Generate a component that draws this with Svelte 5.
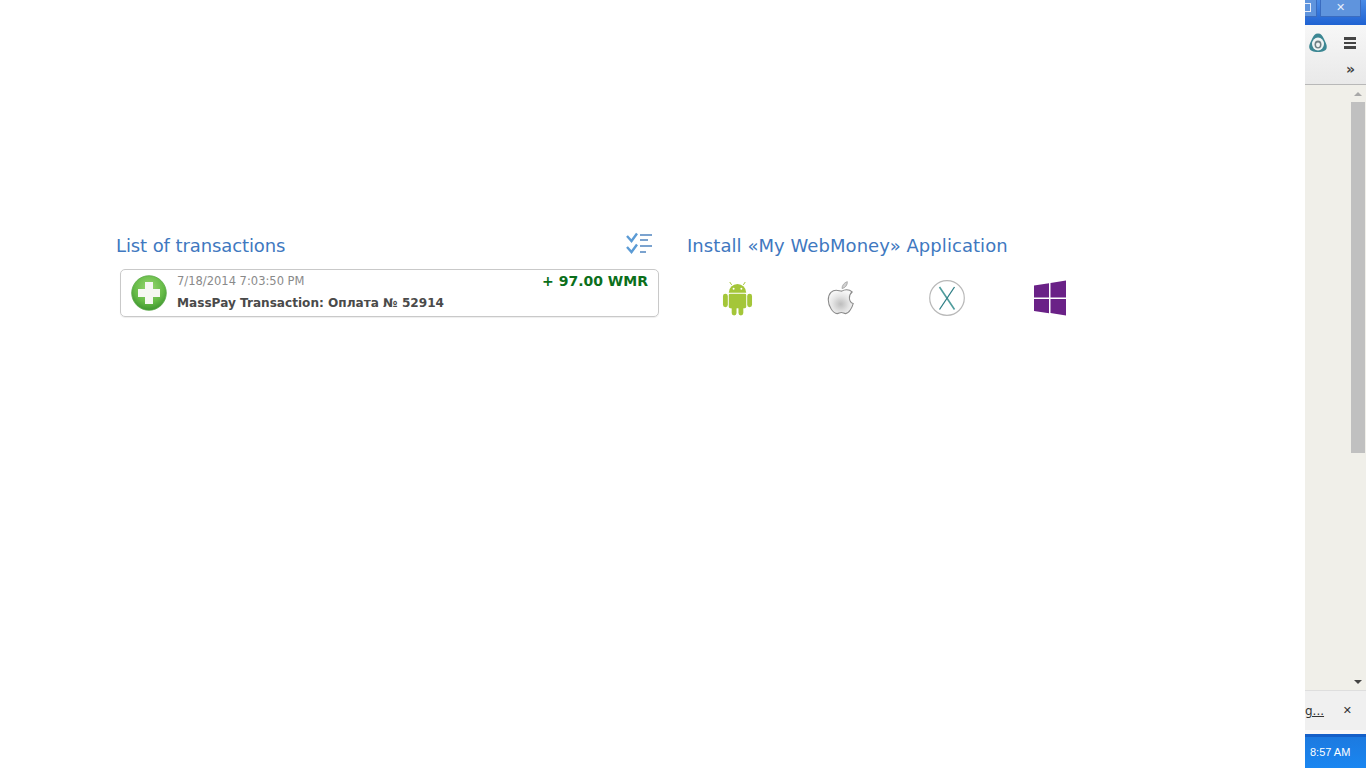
<script>
  const tx = {
    date: '7/18/2014 7:03:50 PM',
    amount: '+ 97.00 WMR',
    title: 'MassPay Transaction: Оплата № 52914'
  };
</script>

<div class="screen">
  <main class="page">
    <section class="left">
      <header class="head">
        <h2>List of transactions</h2>
        <svg class="filter" width="27" height="24" viewBox="0 0 27 24" fill="none" aria-hidden="true">
          <g stroke="#5b9bd5" stroke-width="2.4">
            <path d="M1 4l4.500 5L11 1.500" />
            <path d="M1 15l4.500 5L11 12.500" />
          </g>
          <g stroke="#7ba3cf" stroke-width="2">
            <path d="M14 3h12M14 8h8M14 14h12M14 20h6" />
          </g>
        </svg>
      </header>
      <div class="card">
        <svg class="plus" width="36" height="36" viewBox="0 0 36 36" aria-hidden="true">
          <defs>
            <radialGradient id="gr" cx="50%" cy="35%" r="65%">
              <stop offset="0" stop-color="#9ad873" />
              <stop offset="0.65" stop-color="#66bb47" />
              <stop offset="1" stop-color="#3f9630" />
            </radialGradient>
          </defs>
          <circle cx="18" cy="18" r="17.300" fill="url(#gr)" stroke="#5aa848" stroke-width="0.800" />
          <path d="M14 7h8v7h7v8h-7v7h-8v-7H7v-8h7z" fill="#f6f8f2" />
        </svg>
        <div class="info">
          <div class="top">
            <span class="date">{tx.date}</span>
            <span class="amount">{tx.amount}</span>
          </div>
          <div class="title">{tx.title}</div>
        </div>
      </div>
    </section>
    <section class="right">
      <h2>Install «My WebMoney» Application</h2>
      <div class="apps">
        <svg width="31" height="36" viewBox="0 0 32 36" aria-hidden="true">
          <g fill="#a4c639">
            <path d="M7 12.500a9 9 0 0 1 18 0z" />
            <rect x="7" y="13.500" width="18" height="15" rx="1.500" />
            <rect x="1" y="13.500" width="5" height="14" rx="2.500" />
            <rect x="26" y="13.500" width="5" height="14" rx="2.500" />
            <rect x="10" y="26" width="5" height="10" rx="2.500" />
            <rect x="17" y="26" width="5" height="10" rx="2.500" />
          </g>
          <path d="M10 4.500L8 1.500M22 4.500L24 1.500" stroke="#a4c639" stroke-width="1" />
          <circle cx="12" cy="8.500" r="1" fill="#fff" />
          <circle cx="20" cy="8.500" r="1" fill="#fff" />
        </svg>
        <svg class="apple" width="32" height="38" viewBox="0 0 30 36" aria-hidden="true">
          <defs>
            <radialGradient id="ap" cx="50%" cy="60%" r="55%">
              <stop offset="0" stop-color="#bdbdbd" />
              <stop offset="0.6" stop-color="#e4e4e4" />
              <stop offset="1" stop-color="#f6f6f6" />
            </radialGradient>
          </defs>
          <path d="M14.800 11.500c2-1.200 6.500-2.400 9.800.800c-3.600 2.800-3.600 9.200 1 11c-1 3.700-4 9.500-7.200 9.500c-1.500 0-2.500-1-4-1s-2.500 1-4 1C6.500 32.800 2 25.500 2 20c0-6.800 4.200-9.400 7.500-9.400c2 0 3.700.9 5.300.900z" fill="url(#ap)" stroke="#8a8a8a" stroke-width="1" />
          <path d="M15 9c0-3 2-5.500 5-6.500c.3 3.200-2 6-5 6.500z" fill="#d0d0d0" stroke="#9a9a9a" stroke-width="0.700" />
        </svg>
        <svg class="osx" width="36" height="36" viewBox="0 0 36 36" aria-hidden="true">
          <circle cx="18" cy="18" r="17.300" fill="#fff" stroke="#b9b9b9" stroke-width="1.200" />
          <path d="M10.500 7l15 22.500" stroke="#4f9c9c" stroke-width="1.600" fill="none" />
          <path d="M25.500 7l-15 22.500" stroke="#2f7f86" stroke-width="1.300" fill="none" />
        </svg>
        <svg class="win" width="32" height="36" viewBox="0 0 32 36" aria-hidden="true">
          <path d="M0 5.500l15-2.300v14.300H0zM16.500 3L32 .5v17H16.500zM0 19h15v14.300L0 31zM16.500 19H32v16.500L16.500 33z" fill="#6a2187" />
        </svg>
      </div>
    </section>
  </main>

  <aside class="side">
    <div class="titlebar">
      <span class="winbtn restore"><span></span></span>
      <span class="winbtn close">✕</span>
    </div>
    <div class="toolbar">
      <div class="tools">
        <svg width="20" height="20" viewBox="0 0 20 20" aria-hidden="true">
          <path d="M10 .5c3 0 4.500 2 6 5.500c1.500 3.500 3.500 6.500 2.500 9.500c-.7 2-3.500 3.500-8.500 3.500s-7.800-1.500-8.500-3.500c-1-3 1-6 2.500-9.500C5.500 2.500 7 .5 10 .5z" fill="#3c8793" />
          <ellipse cx="10" cy="11" rx="6" ry="6.500" fill="#eef3f3" />
          <ellipse cx="10" cy="11.500" rx="3.500" ry="4" fill="#6d7f83" />
          <ellipse cx="10" cy="11.800" rx="2" ry="2.400" fill="#eef3f3" />
        </svg>
        <span class="burger"><i></i><i></i><i></i></span>
      </div>
      <div class="more">»</div>
    </div>
    <div class="scroll">
      <div class="track">
        <span class="arrow up"></span>
        <div class="thumb"></div>
        <span class="arrow down"></span>
      </div>
    </div>
    <div class="notice">
      <span class="link">g...</span>
      <span class="x">✕</span>
    </div>
    <div class="gap"></div>
    <div class="taskbar">8:57 AM</div>
  </aside>
</div>

<style>
  :global(body) {
    margin: 0;
    background: #fff;
  }
  .screen {
    display: flex;
    width: 1366px;
    height: 768px;
    overflow: hidden;
    font-family: "DejaVu Sans", Verdana, sans-serif;
  }
  .page {
    width: 1305px;
    box-sizing: border-box;
    padding: 232px 0 0 116px;
    display: flex;
    gap: 28px;
    align-items: flex-start;
  }
  h2 {
    margin: 0;
    font-size: 18px;
    font-weight: 400;
    line-height: 27px;
    color: #4078c0;
  }
  .left {
    width: 543px;
  }
  .left h2 {
    letter-spacing: -0.1px;
  }
  .right h2 {
    letter-spacing: 0.06px;
  }
  .head {
    display: flex;
    justify-content: space-between;
    align-items: flex-start;
    height: 37px;
    padding-right: 6px;
  }
  .card {
    margin-left: 4px;
    height: 48px;
    box-sizing: border-box;
    border: 1px solid #c9c9c9;
    border-radius: 5px;
    display: flex;
    align-items: center;
    padding: 0 10px;
    gap: 10px;
    box-shadow: 0 1px 1px #eee;
  }
  .plus {
    flex: none;
    margin-top: -1px;
  }
  .info {
    flex: 1;
  }
  .top {
    display: flex;
    justify-content: space-between;
    align-items: center;
    height: 20px;
    margin-top: -4px;
  }
  .date {
    font-size: 11.5px;
    color: #8a8a8a;
    margin-top: -2px;
  }
  .amount {
    font-size: 14px;
    font-weight: 700;
    color: #0b6f1b;
    margin-top: -2px;
  }
  .title {
    margin-top: 3px;
    font-size: 12.100px;
    font-weight: 700;
    line-height: 16px;
    color: #4a4a4a;
  }
  .apps {
    display: flex;
    align-items: center;
    padding-left: 35px;
    margin-top: 20px;
    height: 38px;
  }
  .apple {
    margin-left: 73px;
  }
  .osx {
    margin-left: 71px;
  }
  .win {
    margin-left: 69px;
  }
  .side {
    width: 61px;
    flex: none;
    display: flex;
    flex-direction: column;
    background: #f0efe9;
  }
  .titlebar {
    height: 25px;
    flex: none;
    box-sizing: border-box;
    background: linear-gradient(#4a8be6, #1f62d2);
    display: flex;
    align-items: flex-start;
    gap: 3px;
  }
  .winbtn {
    height: 17px;
    background: #5f94dd;
    border: 1px solid #3a6cc0;
    border-top: 0;
    box-sizing: border-box;
    color: #e8eefa;
    font-size: 11px;
    line-height: 15px;
    text-align: center;
    display: block;
  }
  .restore {
    width: 12px;
    border-left: 0;
  }
  .restore span {
    display: block;
    width: 5px;
    height: 7px;
    margin: 3px 0 0 0;
    border: 1px solid #e8eefa;
    border-left: 0;
  }
  .close {
    flex: 1;
    margin-right: 5px;
  }
  .toolbar {
    height: 60px;
    flex: none;
    box-sizing: border-box;
    background: linear-gradient(#f7f7f7, #e9e9e9);
    border-bottom: 1px solid #b8b8b8;
    color: #444;
  }
  .tools {
    display: flex;
    align-items: center;
    justify-content: flex-end;
    gap: 16px;
    padding: 8px 10px 0 0;
  }
  .burger {
    display: flex;
    flex-direction: column;
    gap: 2px;
  }
  .burger i {
    display: block;
    width: 12px;
    height: 2.500px;
    background: #444;
  }
  .more {
    text-align: right;
    padding-right: 11px;
    margin-top: 9px;
    font-size: 14px;
    line-height: 14px;
    font-weight: 700;
  }
  .scroll {
    flex: 1;
    display: flex;
    justify-content: flex-end;
    padding-right: 1px;
  }
  .track {
    width: 14px;
    display: flex;
    flex-direction: column;
    align-items: center;
  }
  .arrow {
    width: 0;
    height: 0;
    border-left: 4px solid transparent;
    border-right: 4px solid transparent;
    flex: none;
  }
  .arrow.up {
    border-bottom: 4px solid #a8a8a8;
    margin-top: 7px;
  }
  .arrow.down {
    border-top: 4px solid #444;
    margin-bottom: 6px;
  }
  .thumb {
    width: 14px;
    height: 351px;
    margin-top: 6px;
    background: #c0c0c0;
  }
  .track .down {
    margin-top: auto;
  }
  .notice {
    height: 40px;
    flex: none;
    box-sizing: border-box;
    background: #f0f0f0;
    border-top: 1px solid #dedede;
    display: flex;
    align-items: center;
    justify-content: space-between;
    padding: 0 14px 0 0;
    font-size: 12px;
    color: #333;
  }
  .link {
    text-decoration: underline;
  }
  .x {
    font-size: 11px;
  }
  .gap {
    height: 4px;
    flex: none;
    background: #f8f8f8;
  }
  .taskbar {
    height: 34px;
    flex: none;
    box-sizing: border-box;
    background: linear-gradient(#1c7ae0, #1a86f0);
    border-top: 3px solid #1560c8;
    color: #fff;
    font-family: "Liberation Sans", Arial, sans-serif;
    font-size: 11px;
    line-height: 31px;
    padding-left: 5px;
  }
</style>
